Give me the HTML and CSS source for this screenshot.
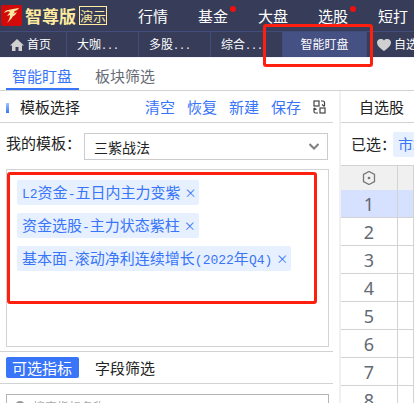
FILE: index.html
```html
<!DOCTYPE html>
<html lang="zh-CN">
<head>
    <meta charset="UTF-8">
    <meta name="viewport" content="width=device-width, initial-scale=1.0">
    <title>智能盯盘</title>
    <link rel="stylesheet" href="styles.css">
</head>
<body>

    <!-- Top navigation -->
    <header>
        <nav class="main-nav">
            <svg class="logo" viewBox="0 0 21 21" aria-hidden="true">
                <rect width="21" height="21" rx="2" fill="#d20a0a"/>
                <path d="M3 8C5 4 9 5 12 4c2 0 4-1 6-1-1 2-3 3-5 3l1 1c-2 1-2 4-3 6l-5 5c2-3 3-5 3-8L6 11l3-4C7 6 5 7 3 8z" fill="#ffe9a0"/>
                <path d="M12 9l4-2-2 3-3 2z" fill="#ffe9a0"/>
            </svg>
            <strong class="brand">智尊版</strong>
            <span class="demo">演示</span>
            <span class="split"></span>
            <a href="#">行情</a>
            <a href="#" class="hot">基金</a>
            <a href="#">大盘</a>
            <a href="#" class="hot">选股</a>
            <a href="#">短打</a>
        </nav>
        <nav class="sub-nav">
            <a href="#" class="home"><svg width="14" height="12" viewBox="0 0 14 12" aria-hidden="true"><path d="M7 0l7 6.500H12V12H8.500V8h-3v4H2V6.500H0z" fill="#d0d0d0"/></svg>首页</a>
            <a href="#">大咖<span class="dots">...</span></a>
            <a href="#">多股<span class="dots">...</span></a>
            <a href="#">综合<span class="dots">...</span></a>
            <a href="#" class="current">智能盯盘<span class="mark mark-tab"></span></a>
            <a href="#" class="fav"><svg width="14" height="12" viewBox="0 0 14 12" aria-hidden="true"><path d="M7 12C4 10 0 7 0 3.500 0 0 5-1.500 7 1.500 9-1.500 14 0 14 3.500 14 7 10 10 7 12z" fill="#d0d0d0"/></svg>自选</a>
        </nav>
    </header>

    <div class="page-tabs">
        <a href="#" class="active">智能盯盘</a>
        <a href="#">板块筛选</a>
    </div>

    <main>
        <!-- Template editor -->
        <section class="left">
            <div class="bar">
                <h2>模板选择</h2>
                <div class="tools">
                    <button type="button">清空</button>
                    <button type="button">恢复</button>
                    <button type="button">新建</button>
                    <button type="button">保存</button>
                    <button type="button" aria-label="切换">
                        <svg width="13" height="14" viewBox="0 0 13 14" fill="none" stroke="#444" stroke-width="1.200" aria-hidden="true">
                            <rect x="1" y="1" width="5" height="5"/>
                            <rect x="7" y="8" width="5" height="5"/>
                            <path d="M8 1h2q1.500 0 1.500 1.500V6M9 4.500L11.500 6.500M1 8v3.500Q1 13 2.500 13H5M1 8l2.500 1.500"/>
                        </svg>
                    </button>
                </div>
            </div>

            <div class="template">
                <label for="template">我的模板：</label>
                <div class="select">
                    <select id="template">
                        <option>三紫战法</option>
                    </select>
                    <svg width="10" height="7" viewBox="0 0 10 7" aria-hidden="true"><path d="M0.500 1L5 5.500 9.500 1" fill="none" stroke="#808080" stroke-width="2"/></svg>
                </div>
            </div>

            <div class="chosen">
                <div class="tag"><span class="en">L2</span>资金<span class="en">-</span>五日内主力变紫<button type="button" aria-label="删除">×</button></div>
                <div class="tag">资金选股<span class="en">-</span>主力状态紫柱<button type="button" aria-label="删除">×</button></div>
                <div class="tag">基本面<span class="en">-</span>滚动净利连续增长<span class="en">(2022</span>年<span class="en">Q4)</span><button type="button" aria-label="删除">×</button></div>
                <span class="mark mark-tags"></span>
            </div>

            <div class="switch">
                <button type="button" class="on">可选指标</button>
                <button type="button">字段筛选</button>
            </div>

            <div class="search">
                <svg width="12" height="12" viewBox="0 0 12 12" aria-hidden="true"><circle cx="5" cy="5" r="4" fill="none" stroke="#999" stroke-width="2"/><path d="M8 8l4 4" stroke="#999" stroke-width="2"/></svg>
                <input type="text" placeholder="搜索指标名称" aria-label="搜索指标名称">
            </div>
        </section>

        <!-- Stock list -->
        <section class="right">
            <h2>自选股</h2>
            <div class="filter">已选：<span class="tag">市场</span></div>
            <table>
                <thead>
                    <tr>
                        <th><svg width="14" height="14" viewBox="0 0 14 14" role="img" aria-label="设置"><path d="M7 0.500L12.500 3.500v7L7 13.500 1.500 10.500v-7z" fill="none" stroke="#777" stroke-width="1.300"/><circle cx="7" cy="7" r="1.300" fill="#777"/></svg></th>
                        <th></th>
                    </tr>
                </thead>
                <tbody>
                    <tr class="picked"><td>1</td><td></td></tr>
                    <tr><td>2</td><td></td></tr>
                    <tr><td>3</td><td></td></tr>
                    <tr><td>4</td><td></td></tr>
                    <tr><td>5</td><td></td></tr>
                    <tr><td>6</td><td></td></tr>
                    <tr><td>7</td><td></td></tr>
                    <tr><td>8</td><td></td></tr>
                </tbody>
            </table>
        </section>
    </main>

</body>
</html>
```
FILE: styles.css
```css
* {
    margin: 0;
    padding: 0;
    box-sizing: border-box;
}

body {
    display: flex;
    flex-direction: column;
    height: 100vh;
    overflow: hidden;
    background: #fff;
    color: #222;
    font-family: "Noto Sans CJK SC", sans-serif;
    font-size: 15px;
    line-height: 20px;
    white-space: nowrap;
}

a {
    color: inherit;
    text-decoration: none;
}

svg {
    flex: none;
}

button {
    border: none;
    background: none;
    color: inherit;
    font: inherit;
    cursor: pointer;
}

h2 {
    font-size: 15px;
    font-weight: normal;
}

/* Header */
header {
    background: #373d58;
    color: #fff;
    border-bottom: 1px solid #f4f2f8;
}

.main-nav {
    display: flex;
    align-items: center;
    height: 32px;
    padding-left: 1px;
    border-bottom: 1px solid #434d7c;
}

.logo {
    width: 21px;
    height: 21px;
}

.brand {
    margin-left: 3px;
    color: #ffec9e;
    font-size: 17px;
}

.demo {
    margin-left: 3px;
    border: 1px solid #ffec9e;
    color: #ffec9e;
    font-size: 13px;
    line-height: 17px;
}

.split {
    width: 1px;
    height: 15px;
    margin: 0 16px 0 15px;
    background: #77766e;
}

.main-nav a {
    position: relative;
    margin-right: 30px;
}

.hot::after {
    content: "";
    position: absolute;
    top: 0;
    right: -8px;
    width: 6px;
    height: 6px;
    border-radius: 50%;
    background: #f01010;
}

.sub-nav {
    display: flex;
    height: 25px;
    overflow: visible;
    font-size: 12px;
    line-height: 24px;
}

.sub-nav a {
    flex: none;
    width: 72px;
    padding-left: 10px;
    border-right: 1px solid #434d7c;
}

.sub-nav svg {
    margin-right: 3px;
    vertical-align: -2px;
}

.sub-nav .home {
    width: 67px;
}

.sub-nav .current {
    position: relative;
    width: 84px;
    padding: 0;
    background: #455083;
    text-align: center;
}

.sub-nav .fav {
    flex: 1;
    border: none;
}

.dots {
    font-family: "Liberation Mono", monospace;
    font-size: 10px;
}

/* Red highlight frames */
.mark {
    position: absolute;
    z-index: 2;
    border: 3px solid #ff1f0f;
    border-radius: 3px;
    pointer-events: none;
}

.mark-tab {
    inset: -8px -7px -10px -20px;
}

.mark-tags {
    inset: 2px 11px 42px 0;
}

/* Page tabs */
.page-tabs {
    display: flex;
    gap: 10px;
    height: 33px;
    padding: 0 6px;
    border-bottom: 1px solid #d3d3d3;
    color: #666b75;
}

.page-tabs a {
    height: 32px;
    padding: 8px 7px 0 6px;
}

.page-tabs .active {
    border-bottom: 2px solid #3875f8;
    color: #3875f8;
}

main {
    display: flex;
    flex: 1;
    min-height: 0;
}

.left {
    flex: 0 1 341px;
    border-right: 2px solid #f0f0f0;
}

.bar {
    display: flex;
    align-items: center;
    justify-content: space-between;
    height: 32px;
    margin-right: 6px;
    padding: 0 7px 0 6px;
    border-bottom: 1px solid #d3d3d3;
}

.bar h2::before {
    content: "";
    display: inline-block;
    width: 3px;
    height: 10px;
    margin-right: 11px;
    background: linear-gradient(#a5c2ff, #3875f8);
}

.tools {
    display: flex;
    align-items: center;
    gap: 12px;
    color: #3875f8;
}

.tools svg {
    display: block;
}

.template {
    display: flex;
    gap: 3px;
    padding: 10px 11px 9px 6px;
}

.select {
    display: flex;
    flex: 1;
    align-items: center;
    height: 27px;
    padding-right: 8px;
    border: 1px solid #ccc;
}

.select select {
    flex: 1;
    padding-left: 9px;
    appearance: none;
    border: none;
    background: none;
    color: #222;
    font: inherit;
    font-size: 14px;
    line-height: 20px;
}

.chosen {
    position: relative;
    display: flex;
    flex-direction: column;
    align-items: flex-start;
    gap: 8px;
    height: 178px;
    margin: 0 10px 4px 6px;
    padding: 10px;
    border: 1px solid #d3d3d3;
}

.tag {
    height: 25px;
    padding: 0 3px 0 5px;
    border-radius: 2px;
    background: #e7f0ff;
    color: #3875f8;
    line-height: 24px;
}

.tag button {
    width: 12px;
    margin-left: 4px;
    font-size: 12px;
    line-height: 20px;
    text-align: center;
}

.en {
    font-family: "Liberation Mono", monospace;
    font-size: 13px;
}

.switch {
    display: flex;
    gap: 10px;
    margin-right: 6px;
    padding: 5px 6px;
    border-top: 1px solid #d3d3d3;
    border-bottom: 1px solid #d3d3d3;
}

.switch button {
    height: 21px;
    padding: 0 7px 0 6px;
    border-radius: 2px;
    line-height: 20px;
}

.switch .on {
    background: #3875f8;
    color: #fff;
}

.search {
    display: flex;
    align-items: center;
    gap: 6px;
    height: 26px;
    margin: 10px 10px 0 6px;
    padding-left: 8px;
    border: 1px solid #b5b5b5;
}

.search input {
    flex: 1;
    min-width: 0;
    border: none;
    font: inherit;
    font-size: 12px;
}

.search input::placeholder {
    color: #aaa;
}

/* Stock list */
.right {
    flex: 1;
    min-width: 0;
    overflow: hidden;
}

.right h2 {
    height: 32px;
    padding-left: 18px;
    border-bottom: 1px solid #d3d3d3;
    line-height: 31px;
}

.filter {
    display: flex;
    align-items: center;
    height: 42px;
    padding-left: 10px;
}

.filter .tag {
    margin-left: -3px;
}

table {
    width: 100%;
    border-collapse: separate;
    border-spacing: 0;
    border-top: 1px solid #d3d3d3;
    table-layout: fixed;
}

th {
    height: 24px;
    background: #f0f0f0;
    border-right: 1px solid #d3d3d3;
}

th svg {
    display: block;
    margin: 0 auto;
}

th:first-child {
    width: 57px;
}

td {
    height: 28px;
    border-right: 1px solid #d3d3d3;
    border-bottom: 1px solid #d3d3d3;
    color: #646a73;
    font-family: "Noto Sans", sans-serif;
    font-size: 18px;
    text-align: center;
}

.picked td {
    background: #d6e0ff;
}
```
